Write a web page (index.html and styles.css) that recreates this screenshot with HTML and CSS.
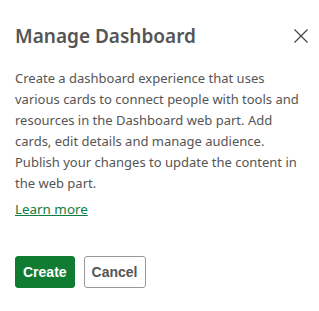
FILE: index.html
```html
<!DOCTYPE html>
<html lang="en">

<head>
    <meta charset="UTF-8">
    <meta name="viewport" content="width=device-width, initial-scale=1.0">
    <title>Manage Dashboard</title>
    <link rel="stylesheet" href="styles.css">
</head>

<body>
    <div class="dialog">
        <div class="dialog-header">
            <h1 class="dialog-title">Manage Dashboard</h1>
            <button class="close-button" aria-label="Close">
                <svg width="16" height="16" viewBox="0 0 16 16">
                    <path d="M1.5 1.5 L14.5 14.5 M14.5 1.5 L1.5 14.5" stroke="#444" stroke-width="1.2" fill="none" />
                </svg>
            </button>
        </div>
        <p class="dialog-text">Create a dashboard experience that uses various cards to connect people with tools and resources in the Dashboard web part. Add cards, edit details and manage audience. Publish your changes to update the content in the web part.</p>
        <a class="learn-more" href="#">Learn more</a>
        <div class="dialog-actions">
            <button class="btn btn-primary">Create</button>
            <button class="btn btn-default">Cancel</button>
        </div>
    </div>
</body>

</html>
```

FILE: styles.css
```css
body {
    margin: 0;
    background: #fff;
    font-family: "Noto Sans", "Open Sans", sans-serif;
}

.dialog {
    padding: 22px 11px 0 15px;
}

.dialog-header {
    display: flex;
    align-items: center;
    justify-content: space-between;
}

.dialog-title {
    margin: 0;
    font-size: 19px;
    font-weight: 600;
    color: #555;
    line-height: 28px;
}

.close-button {
    border: none;
    background: none;
    padding: 0;
    margin-right: -1px;
    width: 16px;
    height: 16px;
    display: flex;
}

.dialog-text {
    margin: 18px 0 0;
    font-size: 13px;
    line-height: 21px;
    color: #555;
}

.learn-more {
    display: inline-block;
    margin-top: 5px;
    font-size: 13.4px;
    line-height: 20px;
    color: #107c41;
}

.dialog-actions {
    display: flex;
    gap: 9px;
    margin-top: 37px;
}

.btn {
    height: 32px;
    border-radius: 3px;
    font-family: "Liberation Sans", Arial, sans-serif;
    font-size: 14px;
    font-weight: bold;
    padding: 0 7px;
}

.btn-primary {
    background: #107c32;
    border: 1px solid #107c32;
    color: #fff;
}

.btn-default {
    background: #fff;
    border: 1px solid #999;
    color: #555;
}
```
